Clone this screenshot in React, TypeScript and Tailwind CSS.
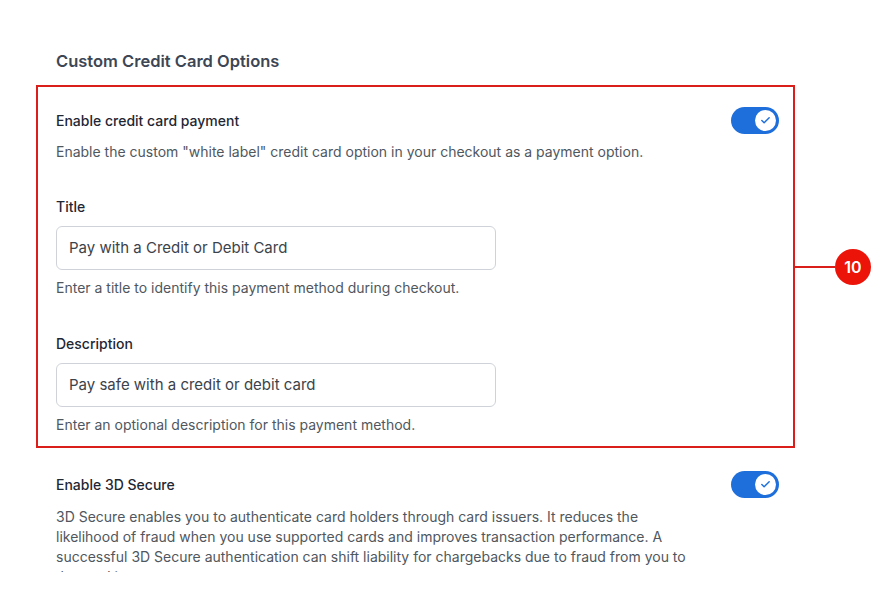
import { Check } from 'lucide-react';

const Toggle = () => (
	<span className="flex items-center w-[48px] h-[27px] rounded-full bg-[#1e6fdc] px-[3px] justify-end shrink-0">
		<span className="flex items-center justify-center w-[21px] h-[21px] rounded-full bg-white">
			<Check size={11} strokeWidth={3.2} className="text-[#1e6fdc]" />
		</span>
	</span>
);

const Field = ({ label, value, help, top }: any) => (
	<div className={top}>
		<div className="text-[14px] leading-[20px] font-medium text-[#1f2733]">{label}</div>
		<div className="mt-[9px] w-[440px] h-[44px] rounded-[6px] border border-[#cfd3d9] px-[12px] flex items-center text-[15px] text-[#3c434a]">
			{value}
		</div>
		<div className="mt-[8px] text-[14px] leading-[20px] text-[#50575e]">{help}</div>
	</div>
);

export default function App() {
	return (
		<div className="h-[572px] overflow-hidden bg-white font-['Inter',sans-serif]">
			<div className="ml-[56px] w-[723px] pt-[49px]">
				<h2 className="text-[16.5px] leading-[24px] font-semibold text-[#3d4654]">
					Custom Credit Card Options
				</h2>

				<div className="relative mt-[12px] -ml-[20px] -mr-[16px] border-2 border-[#da1f1b] pl-[18px] pr-[14px] pt-[19px] pb-[11px]">
					<div className="flex items-center justify-between h-[28px]">
						<span className="text-[14px] font-medium text-[#1f2733]">Enable credit card payment</span>
						<Toggle />
					</div>
					<p className="mt-[8px] text-[14px] leading-[20px] text-[#50575e]">
						Enable the custom "white label" credit card option in your checkout as a payment option.
					</p>

					<Field
						top="mt-[35px]"
						label="Title"
						value="Pay with a Credit or Debit Card"
						help="Enter a title to identify this payment method during checkout."
					/>
					<Field
						top="mt-[36px]"
						label="Description"
						value="Pay safe with a credit or debit card"
						help="Enter an optional description for this payment method."
					/>

					<div className="absolute left-full top-1/2 -translate-y-1/2 flex items-center">
						<span className="w-[42px] h-[2px] bg-[#da1f1b]" />
						<span className="flex items-center justify-center w-[36px] h-[36px] rounded-full bg-[#ec1309] text-white text-[16px] font-semibold">
							10
						</span>
					</div>
				</div>

				<div className="mt-[22px] flex items-center justify-between h-[28px]">
					<span className="text-[14px] font-medium text-[#1f2733]">Enable 3D Secure</span>
					<Toggle />
				</div>
				<p className="mt-[9px] w-[640px] text-[14px] leading-[20px] text-[#50575e]">
					3D Secure enables you to authenticate card holders through card issuers. It reduces the likelihood of
					fraud when you use supported cards and improves transaction performance. A successful 3D Secure
					authentication can shift liability for chargebacks due to fraud from you to the card issuer.
				</p>
			</div>
		</div>
	);
}
